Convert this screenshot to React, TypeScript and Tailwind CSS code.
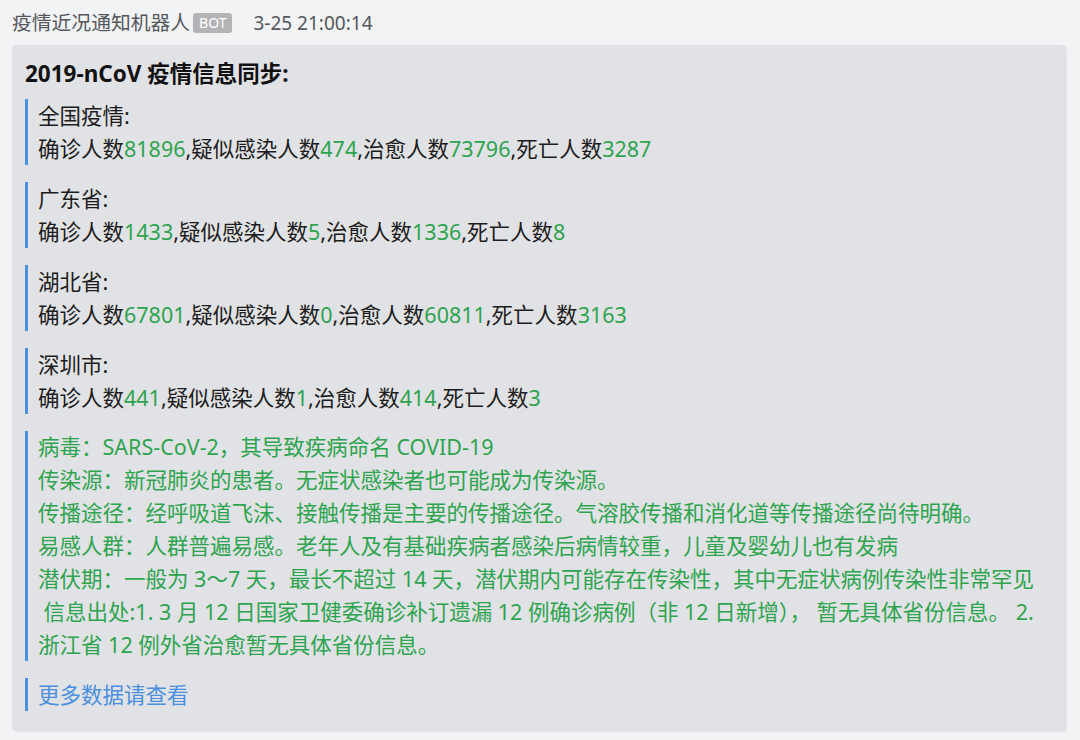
const stats = [
  { title: '全国疫情:', values: ['81896', '474', '73796', '3287'] },
  { title: '广东省:', values: ['1433', '5', '1336', '8'] },
  { title: '湖北省:', values: ['67801', '0', '60811', '3163'] },
  { title: '深圳市:', values: ['441', '1', '414', '3'] },
]

const labels = ['确诊人数', ',疑似感染人数', ',治愈人数', ',死亡人数']

const info = [
  '病毒：SARS-CoV-2，其导致疾病命名 COVID-19',
  '传染源：新冠肺炎的患者。无症状感染者也可能成为传染源。',
  '传播途径：经呼吸道飞沫、接触传播是主要的传播途径。气溶胶传播和消化道等传播途径尚待明确。',
  '易感人群：人群普遍易感。老年人及有基础疾病者感染后病情较重，儿童及婴幼儿也有发病',
  '潜伏期：一般为 3～7 天，最长不超过 14 天，潜伏期内可能存在传染性，其中无症状病例传染性非常罕见',
  '\u00a0信息出处:1. 3 月 12 日国家卫健委确诊补订遗漏 12 例确诊病例（非 12 日新增）， 暂无具体省份信息。 2. 浙江省 12 例外省治愈暂无具体省份信息。',
]

function Quote({ children }: { children: React.ReactNode }) {
  return <div className="border-l-[3px] border-[#4a8fe0] pl-[10px]">{children}</div>
}

export default function App() {
  return (
    <div
      className="min-h-[740px] bg-[#f2f3f5] px-3 pt-[9px] pb-[10px]"
      style={{ fontFamily: '"Noto Sans", "Noto Sans CJK SC", sans-serif' }}
    >
      <div className="flex items-center h-[28px] text-[#55575c]">
        <span className="text-[19.8px] leading-none">疫情近况通知机器人</span>
        <span className="ml-[3px] bg-[#b3b4b6] text-white text-[14px] leading-none rounded-[3px] px-[6px] py-[3px]">
          BOT
        </span>
        <span className="ml-[21px] text-[19px] leading-none">3-25 21:00:14</span>
      </div>

      <div className="mt-[8px] bg-[#e1e2e5] rounded-[4px] shadow-[1px_1px_1px_rgba(0,0,0,0.06)] pl-[13px] pr-[20px] pt-[12px] pb-[20px] w-[1054px]">
        <div className="text-[22.5px] font-bold text-[#111] leading-[33px]">2019-nCoV 疫情信息同步:</div>
        <div className="mt-[9px] flex flex-col gap-[17px] text-[21.5px] leading-[33px] text-[#1c1c1c]">
          {stats.map((s) => (
            <Quote key={s.title}>
              <div>{s.title}</div>
              <div>
                {s.values.map((v, i) => (
                  <span key={i}>
                    {labels[i]}
                    <span className="text-[#2ea44f]">{v}</span>
                  </span>
                ))}
              </div>
            </Quote>
          ))}
          <Quote>
            <div className="text-[#2ea44f] mt-[-1px]">
              {info.map((l, i) => (
                <div key={i}>{l}</div>
              ))}
            </div>
          </Quote>
          <Quote>
            <div className="text-[#4a8fe0]">更多数据请查看</div>
          </Quote>
        </div>
      </div>
    </div>
  )
}
